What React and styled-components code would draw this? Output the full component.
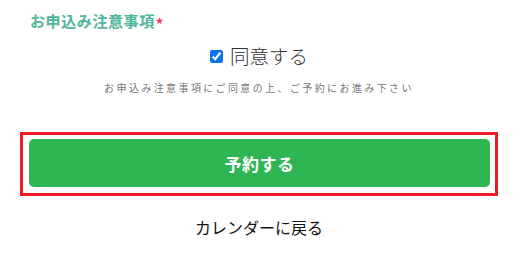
import React from "react";
import styled, { createGlobalStyle } from "styled-components";

const Global = createGlobalStyle`
  html, body { margin: 0; padding: 0; background: #fff; }
  body { font-family: "Noto Sans CJK JP", "Noto Sans", sans-serif; }
`;

const Page = styled.div`
  width: 478px;
  margin-left: 20px;
  padding-top: 11px;
  display: flex;
  flex-direction: column;
`;

const Label = styled.div`
  margin-left: 10px;
  height: 20px;
  font-size: 15px;
  font-weight: 700;
  line-height: 20px;
  color: #4fb59c;
  letter-spacing: 0.6px;
`;

const Required = styled.span`
  color: #f0345c;
  font-size: 15px;
  line-height: 0;
  margin-left: 1px;
  vertical-align: -3px;
`;

const CheckRow = styled.label`
  margin-top: 11px;
  display: flex;
  align-items: center;
  justify-content: center;
  gap: 7px;
  font-size: 19.5px;
  line-height: 28px;
  color: #333;
  font-weight: 300;
`;

const Check = styled.input`
  width: 13px;
  height: 13px;
  margin: 0;
  accent-color: #0b74e8;
`;

const Note = styled.p`
  margin: 10px 0 0;
  text-align: center;
  font-size: 10px;
  line-height: 16px;
  letter-spacing: 2.4px;
  color: #777;
`;

const Frame = styled.div`
  margin-top: 36px;
  border: 3px solid #ed1c24;
  padding: 4px 5px 6px 6px;
`;

const Submit = styled.button`
  width: 100%;
  height: 48px;
  border: none;
  border-radius: 5px;
  background: #2db652;
  color: #fff;
  font-family: inherit;
  font-size: 17px;
  font-weight: 700;
  letter-spacing: 0.5px;
  cursor: pointer;
`;

const Back = styled.a`
  margin-top: 19px;
  text-align: center;
  font-size: 16px;
  line-height: 24px;
  color: #111;
  text-decoration: none;
`;

export default function App() {
  return (
    <>
      <Global />
      <Page>
        <Label>
          お申込み注意事項<Required>*</Required>
        </Label>
        <CheckRow>
          <Check type="checkbox" defaultChecked />
          同意する
        </CheckRow>
        <Note>お申込み注意事項にご同意の上、ご予約にお進み下さい</Note>
        <Frame>
          <Submit type="button">予約する</Submit>
        </Frame>
        <Back href="#">カレンダーに戻る</Back>
      </Page>
    </>
  );
}
